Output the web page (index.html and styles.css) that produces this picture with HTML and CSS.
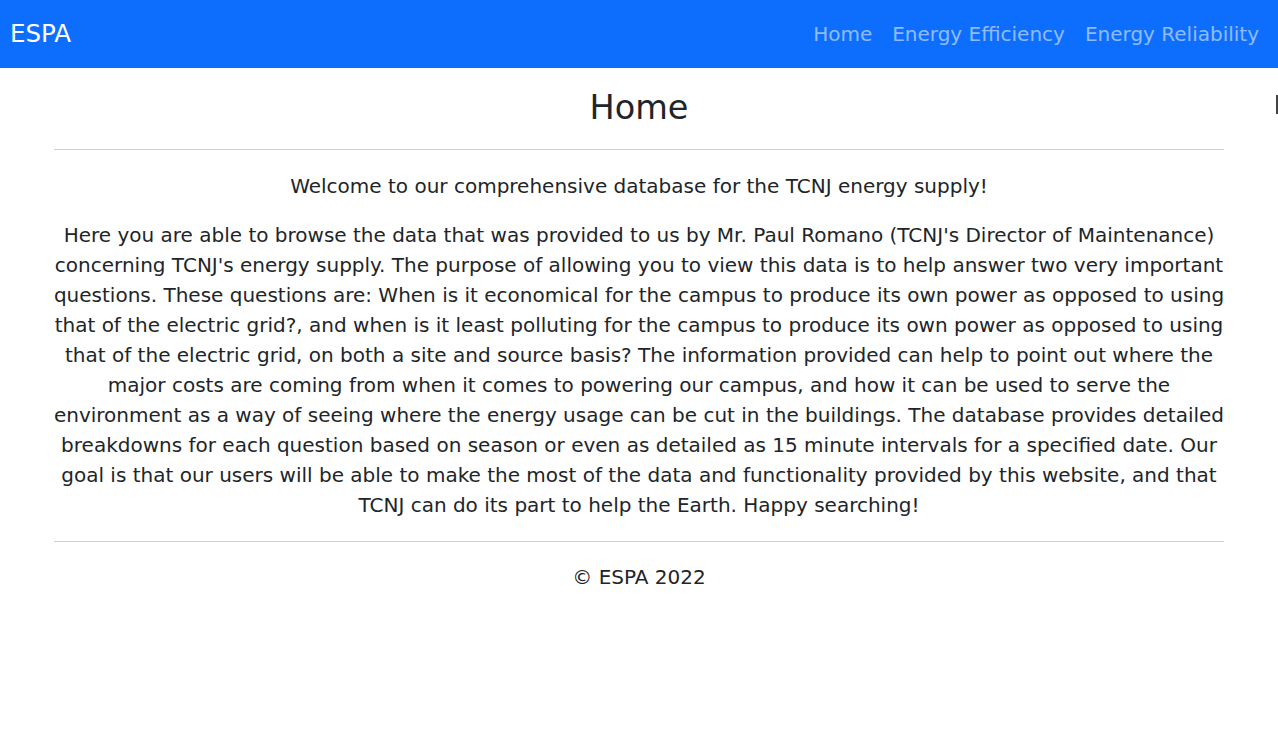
FILE: index.html
```html
<!DOCTYPE html>
<html lang="en">
<head>
<meta charset="utf-8">
<title>ESPA</title>
<link rel="stylesheet" href="styles.css">
</head>
<body>
<nav class="navbar">
  <a class="brand" href="#">ESPA</a>
  <ul class="nav-links">
    <li><a href="#">Home</a></li>
    <li><a href="#">Energy Efficiency</a></li>
    <li><a href="#">Energy Reliability</a></li>
  </ul>
</nav>
<main class="page">
  <span class="edge-mark"></span>
  <h1 class="title">Home</h1>
  <hr class="rule">
  <p class="lead">Welcome to our comprehensive database for the TCNJ energy supply!</p>
  <p class="body-text">Here you are able to browse the data that was provided to us by Mr. Paul Romano (TCNJ's Director of Maintenance) concerning TCNJ's energy supply. The purpose of allowing you to view this data is to help answer two very important questions. These questions are: When is it economical for the campus to produce its own power as opposed to using that of the electric grid?, and when is it least polluting for the campus to produce its own power as opposed to using that of the electric grid, on both a site and source basis? The information provided can help to point out where the major costs are coming from when it comes to powering our campus, and how it can be used to serve the environment as a way of seeing where the energy usage can be cut in the buildings. The database provides detailed breakdowns for each question based on season or even as detailed as 15 minute intervals for a specified date. Our goal is that our users will be able to make the most of the data and functionality provided by this website, and that TCNJ can do its part to help the Earth. Happy searching!</p>
  <hr class="rule rule-bottom">
  <footer class="footer">&copy; ESPA 2022</footer>
</main>
</body>
</html>
```

FILE: styles.css
```css
* { box-sizing: border-box; }
html, body { margin: 0; padding: 0; }
body {
  font-family: "DejaVu Sans", sans-serif;
  color: #212529;
  background: #fff;
  font-size: 20px;
  line-height: 30px;
}
.navbar {
  background: #0d6efd;
  height: 68px;
  display: flex;
  align-items: center;
  justify-content: space-between;
  padding: 0 19px 0 10px;
}
.brand {
  color: #fff;
  text-decoration: none;
  font-size: 24.5px;
  line-height: 30px;
}
.nav-links {
  list-style: none;
  margin: 0;
  padding: 0;
  display: flex;
  gap: 20px;
}
.nav-links a {
  color: rgba(255,255,255,.55);
  text-decoration: none;
  font-size: 20px;
  line-height: 30px;
}
.page {
  position: relative;
  padding: 0 54px;
  text-align: center;
}
.edge-mark {
  position: absolute;
  right: 0;
  top: 27px;
  width: 2px;
  height: 19px;
  background: #444;
}
.title {
  margin: 0;
  padding-top: 18px;
  font-size: 33.5px;
  font-weight: 400;
  line-height: 44px;
}
.rule {
  margin: 19px 0 0;
  border: 0;
  border-top: 1px solid #d0d0d0;
}
.lead {
  margin: 21px 0 0;
}
.body-text {
  margin: 19px -4px 0;
}
.rule-bottom { margin-top: 21px; }
.footer {
  margin-top: 20px;
  padding-bottom: 20px;
}
```
